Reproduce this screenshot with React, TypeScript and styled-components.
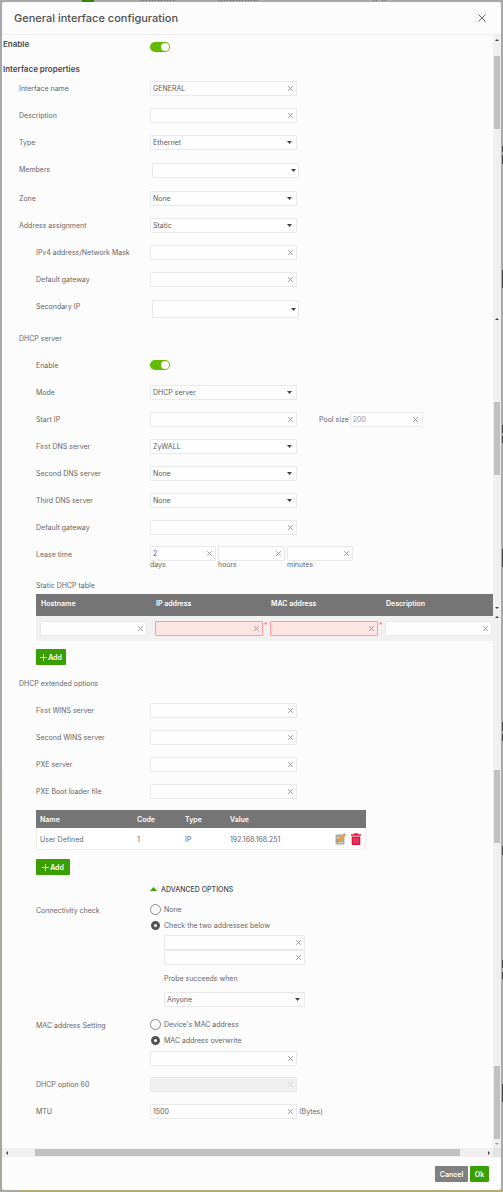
import React from "react";
import styled, { createGlobalStyle, css } from "styled-components";

const GlobalStyle = createGlobalStyle`
  *, *::before, *::after { box-sizing: border-box; }
  body {
    margin: 0;
    background: #adadad;
    font-family: Inter, "Liberation Sans", sans-serif;
    font-size: 7px;
    line-height: 9px;
    color: #666;
  }
  button, input, select { font: inherit; color: inherit; margin: 0; }
`;

/* ---------- page behind the dialog ---------- */

const edgeMarks = [
  [146, 6],
  [155, 9],
  [270, 18],
  [425, 8],
  [436, 7],
  [549, 18],
  [722, 9],
  [734, 7],
  [846, 9],
  [960, 8],
  [972, 7],
  [1084, 18],
]
  .map(([top, height]) => `linear-gradient(#444, #444) 100% ${top}px / 1px ${height}px no-repeat`)
  .join(",");

const topMarks = [
  [140, 36],
  [218, 40],
  [373, 4],
  [382, 4],
]
  .map(([left, width]) => `repeating-linear-gradient(to right, #777 0 1px, #999 1px 3px) ${left}px 0 / ${width}px 1px no-repeat`)
  .join(",");

const Backdrop = styled.div`
  padding: 2px;
  background:
    ${edgeMarks},
    ${topMarks},
    linear-gradient(#358400, #358400) 82px 0 / 12px 2px no-repeat,
    linear-gradient(to right, #a9aba2 0 20px, #b3ad75 20px) 0 100% / 100% 2px no-repeat,
    linear-gradient(#a9a9a9, #aaaba6 50%, #a4aa9c) 0 0 / 2px 100% no-repeat,
    #a9a9a9;
`;

const Dialog = styled.section`
  display: flex;
  flex-direction: column;
  background: #fcfcfc;
  border-radius: 2px;
`;

const Header = styled.header`
  display: flex;
  align-items: center;
  justify-content: space-between;
  height: 33px;
  padding: 0 15px 0 12px;
  border-bottom: 1px solid #eee;
`;

const Title = styled.h1`
  margin: 0;
  font-size: 11px;
  line-height: 14px;
  font-weight: 500;
  color: #505050;
`;

const IconButton = styled.button`
  display: flex;
  align-items: center;
  justify-content: center;
  flex: none;
  padding: 0;
  border: 0;
  background: none;
`;

const Body = styled.div`
  display: flex;
`;

const Form = styled.form`
  flex: 1;
  min-width: 0;
  overflow: hidden;
  padding-bottom: 23px;
`;

/* ---------- form rows ---------- */

const Row = styled.div<{ $height?: number }>`
  display: grid;
  grid-template-columns: 148px 1fr;
  align-items: start;
  min-height: ${(p) => p.$height ?? 27}px;
`;

const labelStyle = css<{ $level?: number; $line?: number }>`
  margin: 0;
  padding-left: ${(p) => (p.$level ?? 1) * 17}px;
  line-height: ${(p) => p.$line ?? 27}px;
  font-size: 7px;
  font-weight: 400;
  white-space: nowrap;
`;

const Label = styled.label<{ $level?: number; $line?: number }>`
  ${labelStyle}
`;

const Legend = styled.h3<{ $level?: number; $line?: number }>`
  ${labelStyle}
`;

const SectionHead = styled.h2`
  margin: 0;
  padding-left: 1px;
  font-size: 8px;
  line-height: 12px;
  font-weight: 600;
  color: #4a4a4a;
`;

const SectionLabel = styled.label`
  padding-left: 1px;
  font-size: 8px;
  line-height: 18px;
  font-weight: 600;
  color: #4a4a4a;
`;

const SubLegend = styled.h3`
  margin: 0;
  padding-left: 34px;
  font-size: 7px;
  line-height: 17px;
  font-weight: 400;
`;

const Controls = styled.div<{ $top?: number; $left?: number }>`
  display: flex;
  align-items: center;
  padding-top: ${(p) => p.$top ?? 6}px;
  padding-left: ${(p) => p.$left ?? 0}px;
`;

const Stack = styled.div<{ $bottom?: number }>`
  display: flex;
  flex-direction: column;
  align-items: flex-start;
  padding-bottom: ${(p) => p.$bottom ?? 0}px;
`;

const Indent = styled.div`
  display: flex;
  flex-direction: column;
  padding: 2px 0 9px 14px;
`;

const Box = styled.span<{ $width: number; $invalid?: boolean; $disabled?: boolean }>`
  display: flex;
  align-items: center;
  flex: none;
  width: ${(p) => p.$width}px;
  height: 15px;
  border: 1px solid ${(p) => (p.$invalid ? "#ff9c9c" : "#e9e9e9")};
  border-radius: 1px;
  background: ${(p) => (p.$invalid ? "#ffe4e4" : p.$disabled ? "#f0f0f0" : "#fefefe")};
  color: ${(p) => (p.$disabled ? "#d4d4d4" : "#999")};
`;

const TextInput = styled.input<{ $muted?: boolean }>`
  flex: 1;
  min-width: 0;
  height: 100%;
  padding: 0 2px;
  border: 0;
  outline: 0;
  background: none;
  color: ${(p) => (p.$muted ? "#999" : "#5c5c5c")};
`;

const ClearButton = styled(IconButton)`
  width: 12px;
  height: 100%;
`;

const SelectBox = styled.span<{ $width: number; $height?: number; $arrow?: number }>`
  display: grid;
  align-items: center;
  flex: none;
  width: ${(p) => p.$width}px;
  height: ${(p) => p.$height ?? 15}px;
  border: 1px solid #e9e9e9;
  border-radius: 1px;
  background: #fefefe;

  & > * { grid-area: 1 / 1; }
  & > svg { justify-self: end; margin-right: ${(p) => p.$arrow ?? 4}px; pointer-events: none; }
`;

const NativeSelect = styled.select`
  appearance: none;
  width: 100%;
  height: 100%;
  padding: 0 2px;
  border: 0;
  outline: 0;
  background: none;
  color: #5c5c5c;
`;

const Toggle = styled.input`
  appearance: none;
  display: flex;
  justify-content: flex-end;
  align-items: center;
  width: 20px;
  height: 10px;
  padding: 1px;
  border-radius: 5px;
  background: #62bb00;

  &::before {
    content: "";
    width: 8px;
    height: 8px;
    border-radius: 50%;
    background: #fff;
  }
  &:not(:checked) { justify-content: flex-start; background: #bbb; }
`;

const RadioLabel = styled.label`
  display: flex;
  align-items: center;
  gap: 3px;
  height: 16px;
`;

const Radio = styled.input`
  appearance: none;
  width: 11px;
  height: 11px;
  border: 1px solid #8a8a8a;
  border-radius: 50%;
  background: #fff;

  &:checked {
    width: 9px;
    height: 9px;
    margin: 0 1px;
    border: 3px solid #555;
  }
`;

const PoolLabel = styled.label`
  padding: 0 1px 0 22px;
`;

const Lease = styled.div`
  display: flex;
  gap: 2px;
  padding-top: 5px;
`;

const LeaseUnit = styled.label`
  display: flex;
  flex-direction: column;
  line-height: 7px;
`;

const GreenButton = styled.button<{ $width: number }>`
  display: flex;
  align-items: center;
  justify-content: center;
  gap: 1px;
  width: ${(p) => p.$width}px;
  height: 16px;
  padding: 0;
  border: 0;
  border-radius: 1px;
  background: #3a9f00;
  color: #fff;
  font-weight: 600;
`;

const GreyButton = styled(GreenButton)`
  background: #808080;
`;

const AddBar = styled.div<{ $top: number; $bottom: number }>`
  padding: ${(p) => p.$top}px 0 ${(p) => p.$bottom}px 34px;
`;

const AdvancedButton = styled.button`
  display: flex;
  align-items: center;
  gap: 4px;
  height: 16px;
  margin: 0 0 4px 148px;
  padding: 0;
  border: 0;
  background: none;
  color: #4a4a4a;
  font-weight: 500;
`;

/* ---------- tables ---------- */

const TableWrap = styled.div`
  padding-left: 34px;
`;

const LeaseTable = styled.table`
  width: 100%;
  table-layout: fixed;
  border-collapse: collapse;

  th {
    width: 115px;
    height: 22px;
    padding: 0 0 4px 5px;
    background: #757575;
    color: #fff;
    text-align: left;
    font-weight: 600;
  }
  th:last-child { width: auto; }
  td {
    height: 25px;
    padding: 0 0 0 4px;
    background: #f1f1f1;
  }
`;

const Cell = styled.div`
  display: flex;
  align-items: flex-start;
`;

const Required = styled.span`
  padding-left: 1px;
  color: #f66;
`;

const OptionsTable = styled.table`
  width: 330px;
  margin-top: 5px;
  table-layout: fixed;
  border-collapse: collapse;
  background: #fff;
  box-shadow: inset 0 0 0 1px #eee;

  th {
    height: 18px;
    padding: 0 4px;
    background: #757575;
    color: #fff;
    text-align: left;
    font-weight: 600;
  }
  td { height: 22px; padding: 0 5px 0 4px; }
`;

const Actions = styled.div`
  display: flex;
  justify-content: flex-end;
  gap: 5px;
`;

/* ---------- scroll bars and footer ---------- */

const ScrollTrack = styled.div`
  display: flex;
  flex-direction: column;
  flex: none;
  width: 8px;
  background: #f0f0f0;
`;

const ScrollPart = styled.div<{ $height: number }>`
  display: flex;
  flex: none;
  flex-direction: column;
  height: ${(p) => p.$height}px;
`;

const ScrollArrow = styled.div`
  display: flex;
  flex: none;
  align-items: center;
  justify-content: center;
  height: 9px;
`;

const Thumb = styled.div<{ $top: number }>`
  flex: none;
  height: 73px;
  margin: ${(p) => p.$top}px 1px 0 1px;
  background: #c1c1c1;
`;

const Spacer = styled.div`
  flex: 1;
`;

const HScroll = styled.div`
  display: flex;
  align-items: center;
  height: 9px;
  background: #f0f0f0;
`;

const HArrow = styled.div`
  display: flex;
  justify-content: center;
  width: 9px;
`;

const HThumb = styled.div`
  flex: 1;
  height: 7px;
  margin: 0 24px;
  background: #c1c1c1;
`;

const Corner = styled.div`
  width: 8px;
  height: 9px;
  background: #e2e2e2;
`;

const Footer = styled.footer`
  display: flex;
  justify-content: flex-end;
  gap: 2px;
  padding: 9px 12px 8px;
`;

/* ---------- icons ---------- */

const Cross = ({ size = 5, stroke = 1 }: { size?: number; stroke?: number }) => (
  <svg width={size} height={size} viewBox="0 0 10 10" fill="none" stroke="currentColor" strokeWidth={(stroke * 10) / size} aria-hidden="true">
    <path d="M0.5 0.5 9.5 9.5M9.5 0.5 0.5 9.5" />
  </svg>
);

const Triangle = ({ dir, width = 5, height = 3, color = "#444" }: { dir: "up" | "down" | "left" | "right"; width?: number; height?: number; color?: string }) => {
  const d = { up: "M0 10 5 0 10 10Z", down: "M0 0H10L5 10Z", left: "M10 0V10L0 5Z", right: "M0 0V10L10 5Z" }[dir];
  return (
    <svg width={width} height={height} viewBox="0 0 10 10" preserveAspectRatio="none" aria-hidden="true">
      <path d={d} fill={color} />
    </svg>
  );
};

const Plus = () => (
  <svg width="7" height="7" viewBox="0 0 7 7" stroke="#fff" strokeWidth="0.8" aria-hidden="true">
    <path d="M3.5 0V7M0 3.5H7" />
  </svg>
);

const EditIcon = () => (
  <svg width="11" height="12" viewBox="0 0 11 12" aria-hidden="true">
    <rect x="0.5" y="1.5" width="9" height="10" fill="#aaa" />
    <path d="M2 4.5H5M2 9.5H8" stroke="#ddd" strokeWidth="0.8" />
    <path d="M2 9.2 2.7 6.6 8.4 0.9 10.2 2.7 4.5 8.5Z" fill="#f9a01b" />
    <path d="M8.4 0.9 9.2 0.2 10.9 1.9 10.2 2.7Z" fill="#e8636b" />
    <path d="M2 9.2 2.4 7.8 3.4 8.8Z" fill="#555" />
  </svg>
);

const TrashIcon = () => (
  <svg width="10" height="12" viewBox="0 0 10 12" aria-hidden="true">
    <path d="M3.2 1.2V0.2H6.8V1.2H10V2.8H0V1.2ZM0.7 3.6H9.3V10.8Q9.3 12 8.1 12H1.9Q0.7 12 0.7 10.8Z" fill="#e0103f" />
    <path d="M3 5V10.4M5 5V10.4M7 5V10.4" stroke="#f48ba3" strokeWidth="0.6" />
  </svg>
);

/* ---------- composed controls ---------- */

type FieldProps = {
  id?: string;
  name: string;
  value?: string;
  width?: number;
  invalid?: boolean;
  disabled?: boolean;
  muted?: boolean;
};

const Field = ({ id, name, value, width = 147, invalid, disabled, muted }: FieldProps) => (
  <Box $width={width} $invalid={invalid} $disabled={disabled}>
    <TextInput id={id} type="text" aria-label={id ? undefined : name} defaultValue={value} disabled={disabled} $muted={muted} />
    <ClearButton type="button" aria-label={`Clear ${name}`} disabled={disabled}>
      <Cross />
    </ClearButton>
  </Box>
);

type SelectProps = { id?: string; name: string; value?: string; width?: number; height?: number; arrow?: number };

const Select = ({ id, name, value = "", width = 147, height, arrow }: SelectProps) => (
  <SelectBox $width={width} $height={height} $arrow={arrow}>
    <NativeSelect id={id} aria-label={id ? undefined : name} defaultValue={value}>
      <option>{value}</option>
    </NativeSelect>
    <Triangle dir="down" />
  </SelectBox>
);

type TextRowProps = { id: string; label: string; level?: number; value?: string; disabled?: boolean; suffix?: React.ReactNode };

const TextRow = ({ id, label, level = 2, value, disabled, suffix }: TextRowProps) => (
  <Row>
    <Label htmlFor={id} $level={level}>{label}</Label>
    <Controls>
      <Field id={id} name={label} value={value} disabled={disabled} />
      {suffix}
    </Controls>
  </Row>
);

const SelectRow = ({ id, label, level = 2, value }: { id: string; label: string; level?: number; value?: string }) => (
  <Row>
    <Label htmlFor={id} $level={level}>{label}</Label>
    <Controls>
      <Select id={id} name={label} value={value} />
    </Controls>
  </Row>
);

const Suffix = styled.span`
  padding-left: 2px;
`;

const VerticalScroll = () => (
  <ScrollTrack aria-hidden="true">
    <ScrollPart $height={279}>
      <ScrollArrow><Triangle dir="up" width={4} height={2} /></ScrollArrow>
      <Thumb $top={12} />
    </ScrollPart>
    <ScrollPart $height={298}>
      <ScrollArrow><Triangle dir="up" width={4} height={2} /></ScrollArrow>
      <Thumb $top={79} />
      <Spacer />
      <ScrollArrow><Triangle dir="down" width={4} height={2} /></ScrollArrow>
    </ScrollPart>
    <ScrollArrow><Triangle dir="up" width={4} height={2} /></ScrollArrow>
    <Thumb $top={149} />
    <Spacer />
    <Thumb $top={0} />
    <ScrollArrow><Triangle dir="down" width={4} height={2} color="#999" /></ScrollArrow>
  </ScrollTrack>
);

export default function App() {
  return (
    <>
      <GlobalStyle />
      <Backdrop>
        <Dialog role="dialog" aria-labelledby="dialog-title">
          <Header>
            <Title id="dialog-title">General interface configuration</Title>
            <IconButton type="button" aria-label="Close">
              <Cross size={8} />
            </IconButton>
          </Header>

          <Body>
            <Form>
              <Row $height={28}>
                <SectionLabel htmlFor="enable">Enable</SectionLabel>
                <Controls $top={7}><Toggle id="enable" type="checkbox" defaultChecked /></Controls>
              </Row>
              <SectionHead>Interface properties</SectionHead>

              <TextRow id="if-name" label="Interface name" level={1} value="GENERAL" />
              <TextRow id="description" label="Description" level={1} />
              <SelectRow id="type" label="Type" level={1} value="Ethernet" />
              <Row $height={29}>
                <Label htmlFor="members">Members</Label>
                <Controls $top={7} $left={2}><Select id="members" name="Members" arrow={2} /></Controls>
              </Row>
              <SelectRow id="zone" label="Zone" level={1} value="None" />
              <SelectRow id="assignment" label="Address assignment" level={1} value="Static" />
              <TextRow id="ipv4" label="IPv4 address/Network Mask" />
              <TextRow id="gateway" label="Default gateway" />
              <Row $height={32}>
                <Label htmlFor="secondary" $level={2}>Secondary IP</Label>
                <Controls $top={7} $left={2}><Select id="secondary" name="Secondary IP" height={18} arrow={2} /></Controls>
              </Row>

              <Legend>DHCP server</Legend>
              <Row>
                <Label htmlFor="dhcp-enable" $level={2}>Enable</Label>
                <Controls $top={8}><Toggle id="dhcp-enable" type="checkbox" defaultChecked /></Controls>
              </Row>
              <SelectRow id="mode" label="Mode" value="DHCP server" />
              <TextRow
                id="start-ip"
                label="Start IP"
                suffix={
                  <>
                    <PoolLabel htmlFor="pool">Pool size</PoolLabel>
                    <Field id="pool" name="Pool size" value="200" width={73} muted />
                  </>
                }
              />
              <SelectRow id="dns1" label="First DNS server" value="ZyWALL" />
              <SelectRow id="dns2" label="Second DNS server" value="None" />
              <SelectRow id="dns3" label="Third DNS server" value="None" />
              <TextRow id="dhcp-gateway" label="Default gateway" />
              <Row $height={36}>
                <Label htmlFor="days" $level={2}>Lease time</Label>
                <Lease>
                  <LeaseUnit><Field id="days" name="days" value="2" width={66} />days</LeaseUnit>
                  <LeaseUnit><Field id="hours" name="hours" width={67} />hours</LeaseUnit>
                  <LeaseUnit><Field id="minutes" name="minutes" width={66} />minutes</LeaseUnit>
                </Lease>
              </Row>

              <SubLegend id="static-title">Static DHCP table</SubLegend>
              <TableWrap>
                <LeaseTable aria-labelledby="static-title">
                  <thead>
                    <tr><th>Hostname</th><th>IP address</th><th>MAC address</th><th>Description</th></tr>
                  </thead>
                  <tbody>
                    <tr>
                      <td><Cell><Field name="Hostname" width={107} /></Cell></td>
                      <td><Cell><Field name="IP address" width={108} invalid /><Required>*</Required></Cell></td>
                      <td><Cell><Field name="MAC address" width={108} invalid /><Required>*</Required></Cell></td>
                      <td><Cell><Field name="Description" width={107} /></Cell></td>
                    </tr>
                  </tbody>
                </LeaseTable>
              </TableWrap>
              <AddBar $top={8} $bottom={5}><GreenButton type="button" $width={30}><Plus />Add</GreenButton></AddBar>

              <Legend>DHCP extended options</Legend>
              <TextRow id="wins1" label="First WINS server" />
              <TextRow id="wins2" label="Second WINS server" />
              <TextRow id="pxe" label="PXE server" />
              <TextRow id="pxe-file" label="PXE Boot loader file" />

              <TableWrap>
                <OptionsTable>
                  <colgroup>
                    <col style={{ width: 97 }} />
                    <col style={{ width: 48 }} />
                    <col style={{ width: 45 }} />
                    <col style={{ width: 90 }} />
                    <col />
                  </colgroup>
                  <thead>
                    <tr><th>Name</th><th>Code</th><th>Type</th><th>Value</th><th aria-label="Actions" /></tr>
                  </thead>
                  <tbody>
                    <tr>
                      <td>User Defined</td><td>1</td><td>IP</td><td>192.168.168.251</td>
                      <td>
                        <Actions>
                          <IconButton type="button" aria-label="Edit"><EditIcon /></IconButton>
                          <IconButton type="button" aria-label="Delete"><TrashIcon /></IconButton>
                        </Actions>
                      </td>
                    </tr>
                  </tbody>
                </OptionsTable>
              </TableWrap>
              <AddBar $top={9} $bottom={6}><GreenButton type="button" $width={34}><Plus />Add</GreenButton></AddBar>

              <AdvancedButton type="button" aria-expanded="true">
                <Triangle dir="up" width={7} height={4} color="#3a9f00" />
                ADVANCED OPTIONS
              </AdvancedButton>

              <Row>
                <Legend $level={2} $line={20}>Connectivity check</Legend>
                <Stack>
                  <RadioLabel><Radio type="radio" name="check" />None</RadioLabel>
                  <RadioLabel><Radio type="radio" name="check" defaultChecked />Check the two addresses below</RadioLabel>
                  <Indent>
                    <Field name="First check address" width={141} />
                    <Field name="Second check address" width={141} />
                    <Label htmlFor="probe" $level={0}>Probe succeeds when</Label>
                    <Select id="probe" name="Probe succeeds when" value="Anyone" width={141} />
                  </Indent>
                </Stack>
              </Row>
              <Row>
                <Legend $level={2} $line={20}>MAC address Setting</Legend>
                <Stack $bottom={5}>
                  <RadioLabel><Radio type="radio" name="mac" />Device's MAC address</RadioLabel>
                  <RadioLabel><Radio type="radio" name="mac" defaultChecked />MAC address overwrite</RadioLabel>
                  <Controls $top={3}><Field name="MAC address overwrite" /></Controls>
                </Stack>
              </Row>
              <TextRow id="opt60" label="DHCP option 60" disabled />
              <TextRow id="mtu" label="MTU" value="1500" suffix={<Suffix>(Bytes)</Suffix>} />
            </Form>
            <VerticalScroll />
          </Body>

          <HScroll aria-hidden="true">
            <HArrow><Triangle dir="left" width={2} height={4} /></HArrow>
            <HThumb />
            <HArrow><Triangle dir="right" width={2} height={4} /></HArrow>
            <Corner />
          </HScroll>

          <Footer>
            <GreyButton type="button" $width={33}>Cancel</GreyButton>
            <GreenButton type="button" $width={19}>Ok</GreenButton>
          </Footer>
        </Dialog>
      </Backdrop>
    </>
  );
}
